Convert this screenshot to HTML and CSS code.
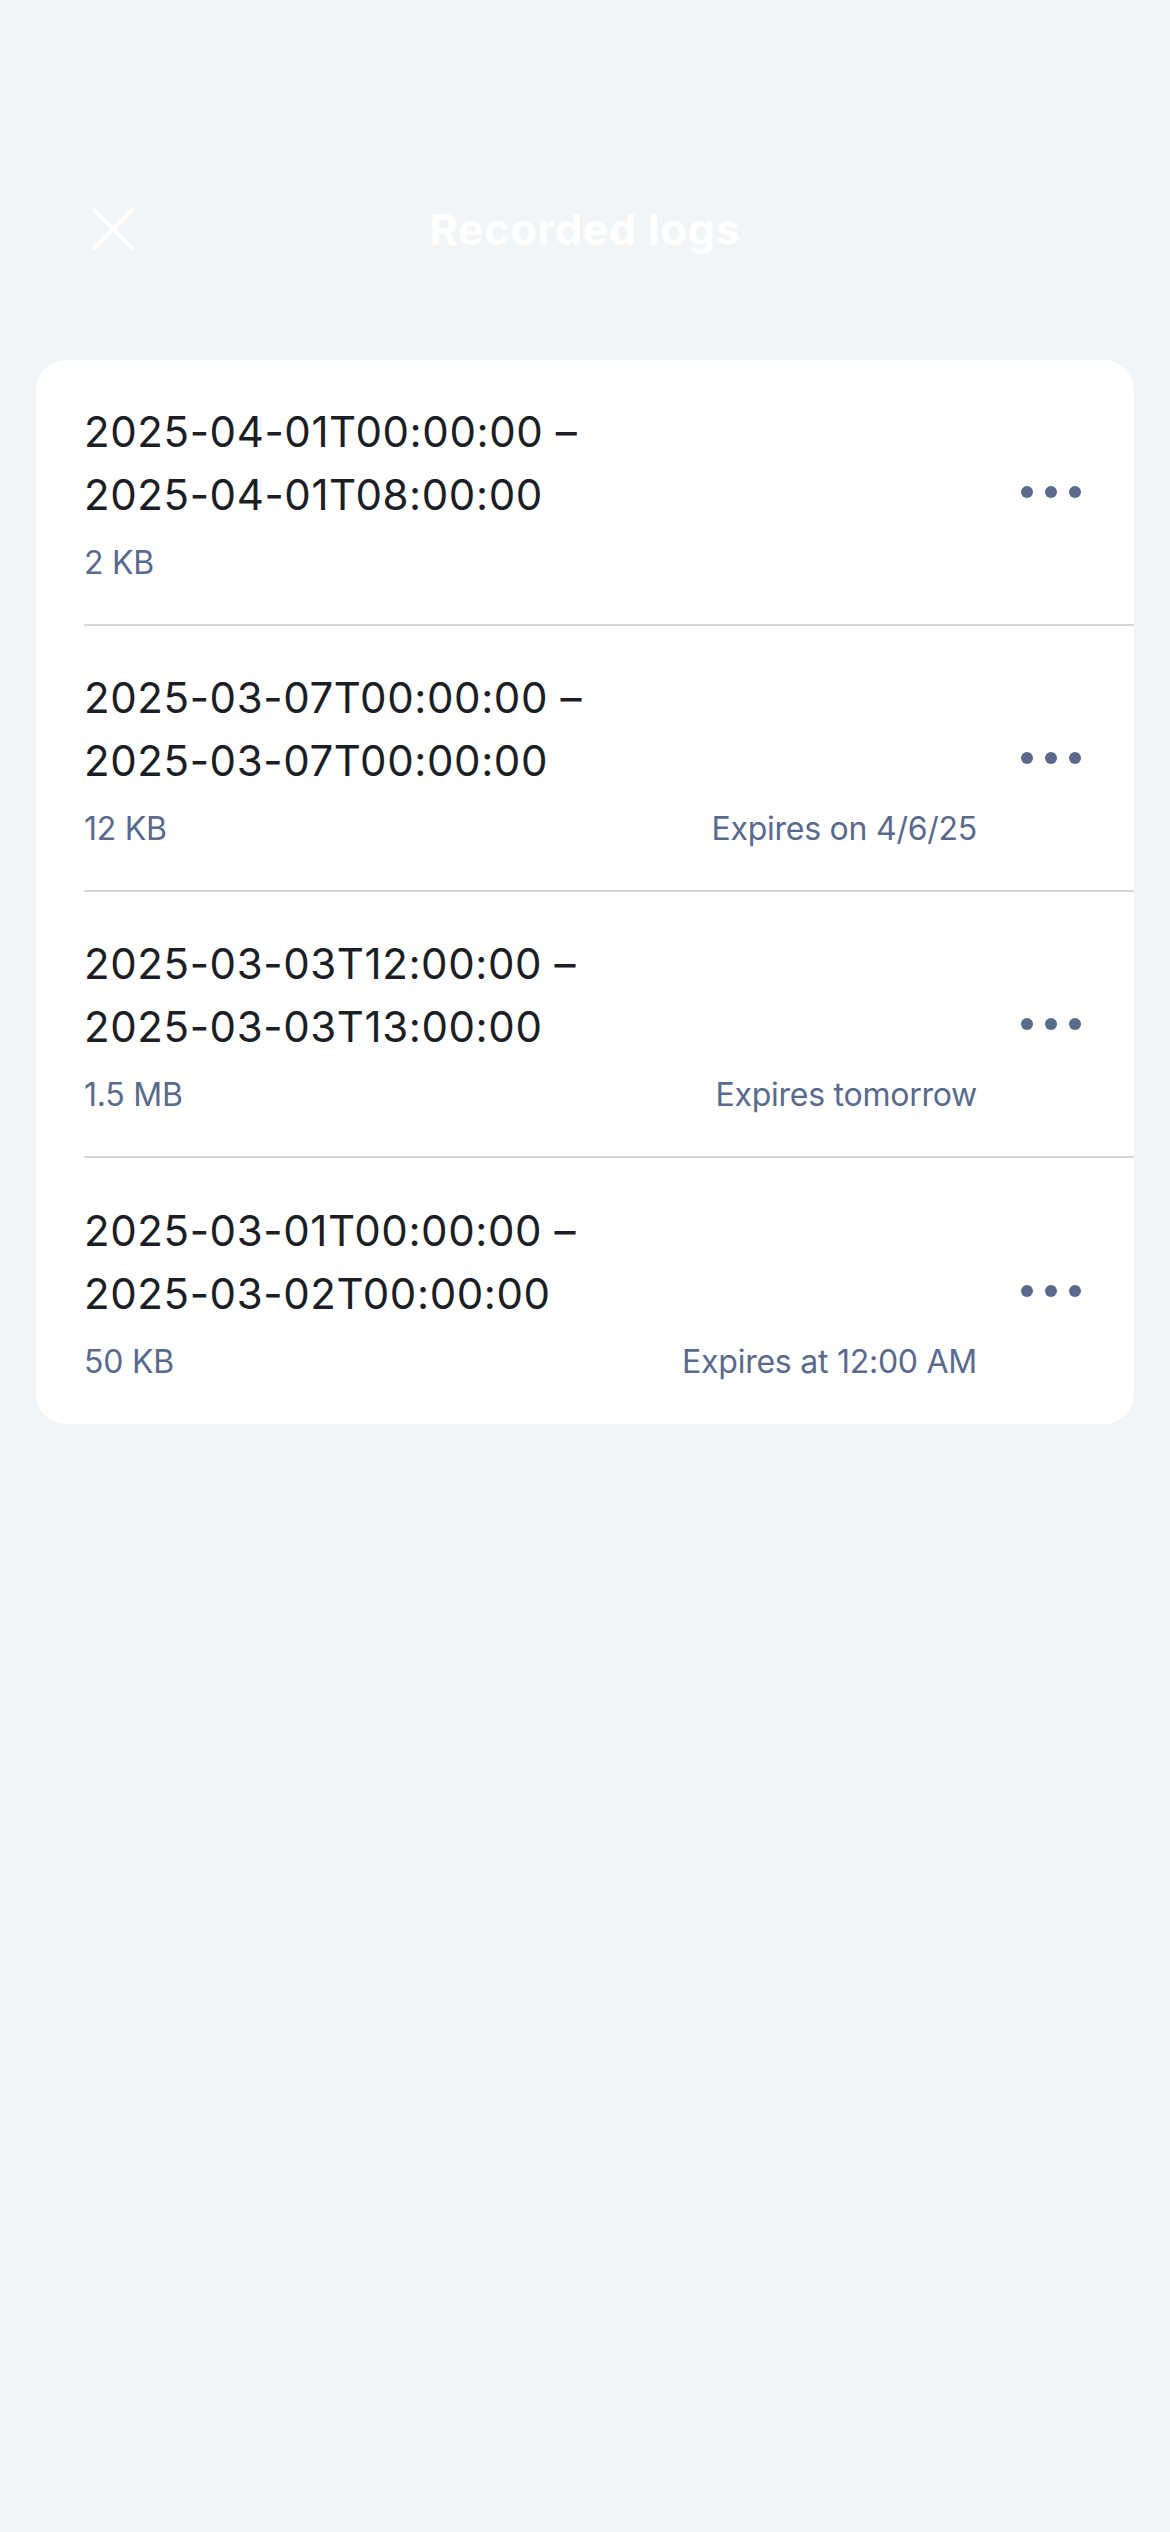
FILE: index.html
```html
<!DOCTYPE html>
<html lang="en">
<head>
<meta charset="utf-8">
<title>Recorded logs</title>
<link rel="stylesheet" href="styles.css">
</head>
<body>
<header class="topbar">
  <div class="topbar-left">
    <button class="close-btn" aria-label="Close">
      <svg width="44" height="44" viewBox="0 0 44 44"><path d="M3 3 L41 41 M41 3 L3 41" stroke="#ffffff" stroke-width="4" stroke-linecap="round" fill="none"/></svg>
    </button>
  </div>
  <h1 class="title">Recorded logs</h1>
  <div class="topbar-right"></div>
</header>

<main class="card">
  <div class="row">
    <div class="row-main">
      <div class="range"><span class="line">2025-04-01T00:00:00 –</span><span class="line">2025-04-01T08:00:00</span></div>
      <div class="meta"><span>2 KB</span><span></span></div>
    </div>
    <button class="more" aria-label="More"><svg width="60" height="12" viewBox="0 0 60 12"><circle cx="6" cy="6" r="6"/><circle cx="30" cy="6" r="6"/><circle cx="54" cy="6" r="6"/></svg></button>
  </div>
  <div class="row">
    <div class="row-main">
      <div class="range"><span class="line">2025-03-07T00:00:00 –</span><span class="line">2025-03-07T00:00:00</span></div>
      <div class="meta"><span>12 KB</span><span>Expires on 4/6/25</span></div>
    </div>
    <button class="more" aria-label="More"><svg width="60" height="12" viewBox="0 0 60 12"><circle cx="6" cy="6" r="6"/><circle cx="30" cy="6" r="6"/><circle cx="54" cy="6" r="6"/></svg></button>
  </div>
  <div class="row">
    <div class="row-main">
      <div class="range"><span class="line">2025-03-03T12:00:00 –</span><span class="line">2025-03-03T13:00:00</span></div>
      <div class="meta"><span>1.5 MB</span><span>Expires tomorrow</span></div>
    </div>
    <button class="more" aria-label="More"><svg width="60" height="12" viewBox="0 0 60 12"><circle cx="6" cy="6" r="6"/><circle cx="30" cy="6" r="6"/><circle cx="54" cy="6" r="6"/></svg></button>
  </div>
  <div class="row">
    <div class="row-main">
      <div class="range"><span class="line">2025-03-01T00:00:00 –</span><span class="line">2025-03-02T00:00:00</span></div>
      <div class="meta"><span>50 KB</span><span>Expires at 12:00 AM</span></div>
    </div>
    <button class="more" aria-label="More"><svg width="60" height="12" viewBox="0 0 60 12"><circle cx="6" cy="6" r="6"/><circle cx="30" cy="6" r="6"/><circle cx="54" cy="6" r="6"/></svg></button>
  </div>
</main>
</body>
</html>
```

FILE: styles.css
```css
* { box-sizing: border-box; }

html, body {
  margin: 0;
  padding: 0;
  background: #f2f5f8;
}

body {
  font-family: Inter, "Noto Sans", "Liberation Sans", sans-serif;
  color: #1b1e25;
  min-height: 2532px;
}

.topbar {
  display: grid;
  grid-template-columns: 1fr auto 1fr;
  align-items: center;
  height: 92px;
  margin-top: 183px;
  margin-bottom: 85px;
}

.topbar-left {
  padding-left: 91px;
  display: flex;
  align-items: center;
}

.close-btn {
  border: 0;
  background: transparent;
  padding: 0;
  width: 44px;
  height: 44px;
  display: block;
}

.close-btn svg { display: block; }

.title {
  margin: 0;
  font-size: 43px;
  font-weight: 700;
  color: #ffffff;
  line-height: 1;
  letter-spacing: 0.8px;
}

.card {
  margin: 0 36px;
  background: #ffffff;
  border-radius: 30px;
  overflow: hidden;
}

.row {
  display: flex;
  align-items: center;
  margin-left: 48px;
  padding: 41px 53px 42px 0;
  border-bottom: 2px solid #d6d7da;
  height: 266px;
}

.row:last-child { border-bottom: 0; }

.row-main {
  flex: 1;
  min-width: 0;
}

.range {
  font-size: 42px;
  line-height: 63px;
  font-weight: 400;
  color: #1b1e25;
  letter-spacing: 0.6px;
}

.range .line { display: block; white-space: nowrap; }

.meta {
  display: flex;
  justify-content: space-between;
  margin-top: 17px;
  font-size: 32px;
  line-height: 40px;
  color: #5a6a8e;
  letter-spacing: -0.25px;
}

.more {
  border: 0;
  background: transparent;
  padding: 0;
  margin-left: 44px;
  width: 60px;
  height: 12px;
  display: block;
}

.more svg { display: block; fill: #5b6a8c; }
```
